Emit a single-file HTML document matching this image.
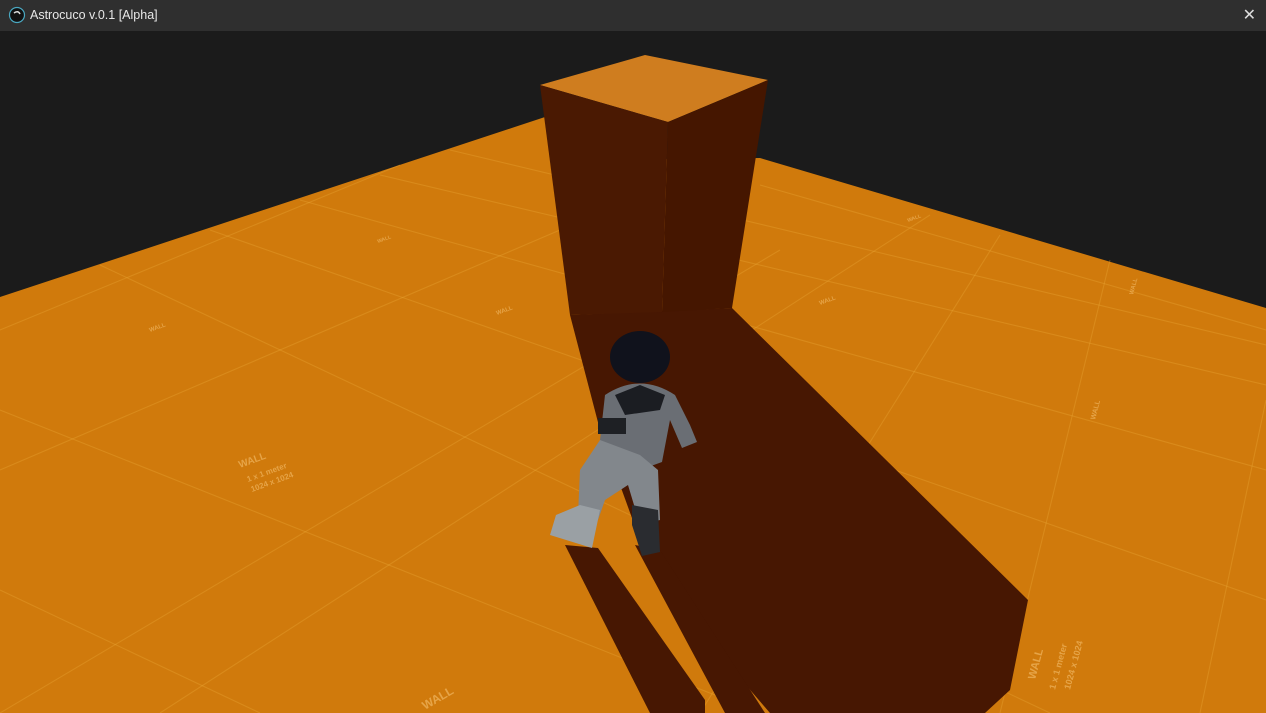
<!DOCTYPE html>
<html><head><style>
html,body{margin:0;padding:0;width:1266px;height:713px;overflow:hidden;background:#1b1b1b;font-family:"Liberation Sans",sans-serif}
.tb{position:absolute;left:0;top:0;width:1266px;height:31px;background:#2f2f2f;border-bottom:1px solid #3a3a3a}
.tb .t{position:absolute;left:30px;top:8px;color:#e8e8e8;font-size:12.5px}
.tb .x{position:absolute;right:10px;top:5px;color:#ddd;font-size:16px;font-family:"DejaVu Sans",sans-serif}
svg{position:absolute;left:0;top:31px}
</style></head><body>
<div class="tb"><svg width="20" height="20" style="left:8px;top:6px" viewBox="0 0 20 20"><circle cx="9" cy="9" r="7.5" fill="#111" stroke="#4aa7c0" stroke-width="1.2"/><path d="M6 7 Q10 4 12 8" stroke="#ddd" stroke-width="1.5" fill="none"/></svg><span class="t">Astrocuco v.0.1 [Alpha]</span><span class="x">✕</span></div>
<svg width="1266" height="682" viewBox="0 31 1266 682">
<rect x="0" y="31" width="1266" height="682" fill="#1b1b1b"/>
<polygon points="0,297 545,117 560,160 760,158 1266,308 1266,713 0,713" fill="#d07a0c"/>
<g stroke="#f0b040" stroke-opacity="0.3" stroke-width="1.1" fill="none">
<line x1="0" y1="410" x2="760" y2="713"/>
<line x1="0" y1="590" x2="260" y2="713"/>
<line x1="100" y1="265" x2="1050" y2="713"/>
<line x1="210" y1="230" x2="1266" y2="600"/>
<line x1="300" y1="200" x2="1266" y2="470"/>
<line x1="380" y1="175" x2="1266" y2="385"/>
<line x1="450" y1="150" x2="1266" y2="345"/>
<line x1="760" y1="185" x2="1266" y2="330"/>
<line x1="400" y1="165" x2="0" y2="330"/>
<line x1="560" y1="230" x2="0" y2="470"/>
<line x1="780" y1="250" x2="0" y2="713"/>
<line x1="930" y1="215" x2="160" y2="713"/>
<line x1="1000" y1="235" x2="700" y2="713"/>
<line x1="1110" y1="260" x2="1000" y2="713"/>
<line x1="1266" y1="400" x2="1200" y2="713"/>
</g>
<polygon points="570,315 732,308 1028,600 1010,690 985,713 770,713 690,620 640,540 600,430" fill="#471702"/>
<polygon points="565,545 598,548 705,700 705,713 650,713" fill="#471702"/>
<polygon points="635,545 660,550 765,713 725,713" fill="#471702"/>
<polygon points="540,85 645,55 768,80 668,122" fill="#cf7d1f"/>
<polygon points="540,85 668,122 662,312 570,315" fill="#4a1902"/>
<polygon points="668,122 768,80 732,308 662,312" fill="#451600"/>
<g>
<ellipse cx="640" cy="357" rx="30" ry="26" fill="#10121c"/>
<path d="M605,395 Q640,372 675,395 L690,425 L697,442 L682,448 L670,420 L662,462 L640,470 L615,465 L600,440 Z" fill="#6a6e74"/>
<path d="M615,395 L640,385 L665,395 L660,410 L625,415 Z" fill="#1b1d22"/>
<path d="M600,440 L640,455 L658,470 L660,520 L640,525 L628,485 L605,500 L598,520 L578,515 L580,470 Z" fill="#82878c"/>
<path d="M580,505 L600,510 L592,548 L550,535 L556,515 Z" fill="#9aa0a4"/>
<path d="M632,505 L658,510 L660,552 L642,556 L632,525 Z" fill="#2a2c30"/>
<rect x="598" y="418" width="28" height="16" fill="#1e2024"/>
</g>
<g fill="#f5c070" fill-opacity="0.6" font-family="Liberation Sans" font-weight="bold">
<text x="240" y="468" font-size="10" transform="rotate(-20 240 468)">WALL</text>
<text x="248" y="482" font-size="8" transform="rotate(-20 248 482)">1 x 1 meter</text>
<text x="252" y="492" font-size="8" transform="rotate(-20 252 492)">1024 x 1024</text>
<text x="425" y="710" font-size="12" transform="rotate(-30 425 710)">WALL</text>
<text x="1035" y="680" font-size="11" transform="rotate(-75 1035 680)">WALL</text>
<text x="1055" y="690" font-size="9" transform="rotate(-75 1055 690)">1 x 1 meter</text>
<text x="1070" y="690" font-size="9" transform="rotate(-75 1070 690)">1024 x 1024</text>
<text x="1095" y="420" font-size="7" transform="rotate(-75 1095 420)">WALL</text>
<text x="820" y="305" font-size="6" transform="rotate(-20 820 305)">WALL</text>
<text x="150" y="332" font-size="6" transform="rotate(-20 150 332)">WALL</text>
<text x="497" y="315" font-size="6" transform="rotate(-20 497 315)">WALL</text>
<text x="378" y="243" font-size="5" transform="rotate(-20 378 243)">WALL</text>
<text x="908" y="222" font-size="5" transform="rotate(-20 908 222)">WALL</text>
<text x="1133" y="295" font-size="6" transform="rotate(-75 1133 295)">WALL</text>
</g>
</svg>
</body></html>
